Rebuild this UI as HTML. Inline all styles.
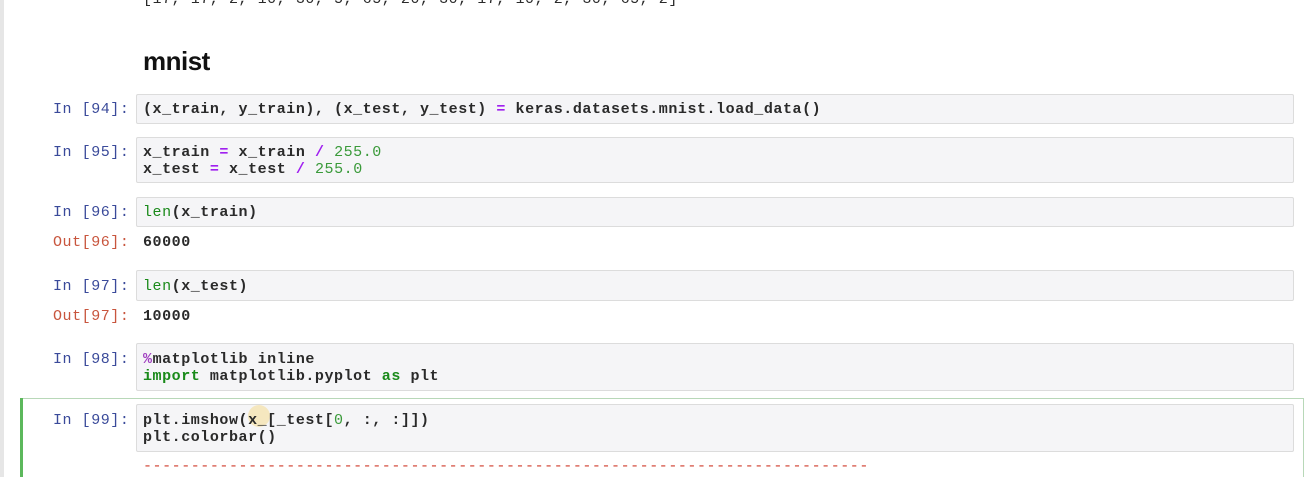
<!DOCTYPE html>
<html><head><style>
html,body{margin:0;padding:0;width:1310px;height:477px;overflow:hidden;background:#fff;position:relative}
.m{font-family:"Liberation Mono",monospace;font-size:15px;letter-spacing:0.55px;font-weight:bold;color:#2a2a2a;white-space:pre;position:absolute;line-height:17px}
.p{font-weight:normal;color:#3a4a9a}
.o{color:#c8553d;font-weight:normal}
.box{position:absolute;left:136px;width:1158px;background:#f5f5f7;border:1px solid #dcdcdc;border-radius:2px;box-sizing:border-box}
.k{color:#1a8a1a}.n{color:#3a9a3a;font-weight:normal}.op{color:#a020f0}.mg{color:#a040c0}
</style></head><body>
<div style="position:absolute;left:0;top:0;width:4px;height:477px;background:#e6e6e6"></div>
<div class="m" style="left:143px;top:-9px;font-weight:normal">[17, 17, 2, 10, 30, 5, 65, 20, 30, 17, 10, 2, 30, 65, 2]</div>
<div style="position:absolute;left:143px;top:46px;font-family:'Liberation Sans',sans-serif;font-weight:bold;font-size:26px;letter-spacing:-0.5px;color:#111">mnist</div>

<div class="box" style="top:94px;height:30px"></div>
<div class="m p" style="left:53px;top:101px">In [94]:</div>
<div class="m" style="left:143px;top:101px">(x_train, y_train), (x_test, y_test) <span class="op">=</span> keras.datasets.mnist.load_data()</div>

<div class="box" style="top:137px;height:46px"></div>
<div class="m p" style="left:53px;top:144px">In [95]:</div>
<div class="m" style="left:143px;top:144px">x_train <span class="op">=</span> x_train <span class="op">/</span> <span class="n">255.0</span>
x_test <span class="op">=</span> x_test <span class="op">/</span> <span class="n">255.0</span></div>

<div class="box" style="top:197px;height:30px"></div>
<div class="m p" style="left:53px;top:204px">In [96]:</div>
<div class="m" style="left:143px;top:204px"><span class="k" style="font-weight:normal">len</span>(x_train)</div>
<div class="m o" style="left:53px;top:234px">Out[96]:</div>
<div class="m" style="left:143px;top:234px">60000</div>

<div class="box" style="top:270px;height:31px"></div>
<div class="m p" style="left:53px;top:278px">In [97]:</div>
<div class="m" style="left:143px;top:278px"><span class="k" style="font-weight:normal">len</span>(x_test)</div>
<div class="m o" style="left:53px;top:308px">Out[97]:</div>
<div class="m" style="left:143px;top:308px">10000</div>

<div class="box" style="top:343px;height:48px"></div>
<div class="m p" style="left:53px;top:351px">In [98]:</div>
<div class="m" style="left:143px;top:351px"><span class="mg">%</span>matplotlib inline
<span class="k">import</span> matplotlib.pyplot <span class="k">as</span> plt</div>

<div style="position:absolute;left:20px;top:398px;width:1284px;height:90px;border:1px solid #b8d8b8;box-sizing:border-box"></div>
<div style="position:absolute;left:20px;top:398px;width:3px;height:80px;background:#5cb85c"></div>
<div class="box" style="top:404px;height:48px"></div>
<div style="position:absolute;left:248px;top:405px;width:22px;height:22px;border-radius:50%;background:#f5e3b0;opacity:.8"></div>
<div class="m p" style="left:53px;top:412px">In [99]:</div>
<div class="m" style="left:143px;top:412px">plt.imshow(x_[_test[<span class="n">0</span>, :, :]])
plt.colorbar()</div>
<div class="m" style="left:143px;top:458px;color:#d04030;font-weight:normal">----------------------------------------------------------------------------</div>
</body></html>
